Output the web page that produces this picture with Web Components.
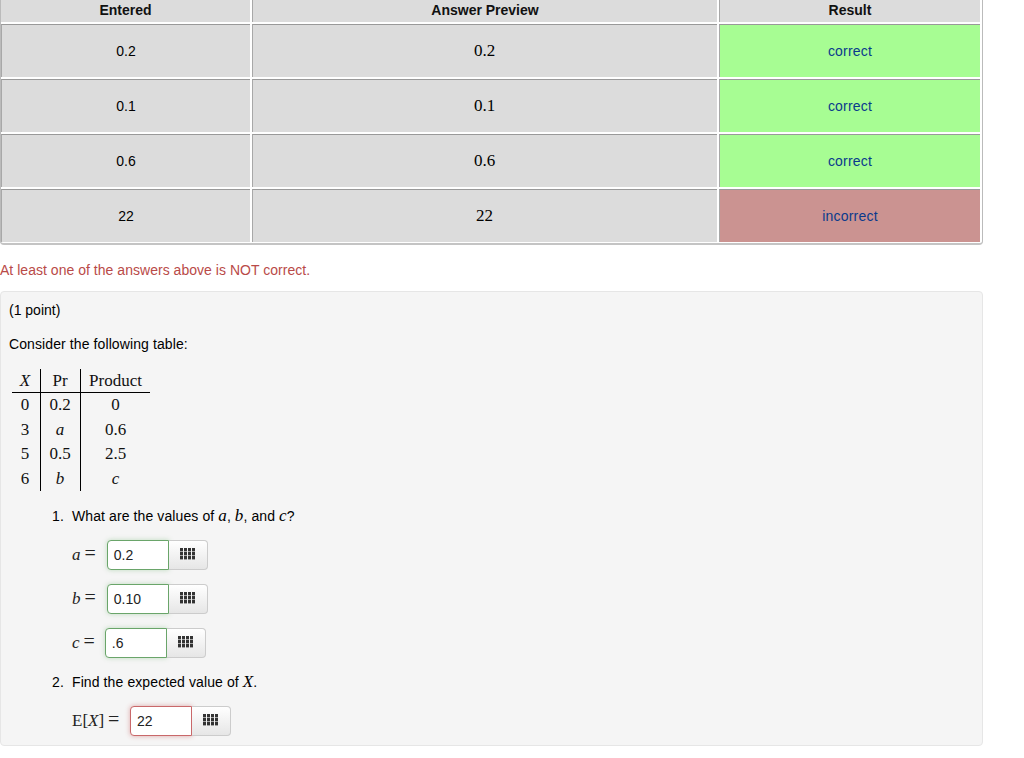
<!DOCTYPE html>
<html>
<head>
<meta charset="utf-8">
<title>Problem</title>
<style>
    html, body { margin: 0; background: #fff; overflow: hidden; }
    body { font: 14px/20px "Liberation Sans", Arial, sans-serif; color: #000; }
</style>
</head>
<body>

<results-table>
    <result-row entered="0.2" status="correct"></result-row>
    <result-row entered="0.1" status="correct"></result-row>
    <result-row entered="0.6" status="correct"></result-row>
    <result-row entered="22" status="incorrect"></result-row>
</results-table>

<attempt-message>At least one of the answers above is NOT correct.</attempt-message>

<problem-panel>
    <prob-text style="margin-bottom:14px;letter-spacing:0">(1 point)</prob-text>
    <prob-text>Consider the following table:</prob-text>
    <product-table></product-table>
    <prob-step num="1." style="margin-top:15px">
        <span slot="q">What are the values of <m-var>a</m-var>, <m-var>b</m-var>, and <m-var>c</m-var>?</span>
        <answer-field label="a" value="0.2" state="good"></answer-field>
        <answer-field label="b" value="0.10" state="good"></answer-field>
        <answer-field label="c" value=".6" state="good" style="--gap:10px"></answer-field>
    </prob-step>
    <prob-step num="2." style="margin-top:14px">
        <span slot="q">Find the expected value of <m-var>X</m-var>.</span>
        <answer-field label="E[X]" value="22" state="bad" style="--gap:10.5px"></answer-field>
    </prob-step>
</problem-panel>

<script>
//RESULTS TABLE
class ResultsTable extends HTMLElement {
    constructor(){
        super()
        this.attachShadow({mode: "open"})
        this.shadowRoot.innerHTML = `
        <style>
            :host {
                display: block;
                width: 983px;
                height: 245px;
                box-sizing: border-box;
                border-right: 1px solid #bbb;
                border-bottom: 2px solid #c4c4c4;
                border-left: 1px solid #bbb;
                border-bottom-right-radius: 4px;
                border-bottom-left-radius: 4px;
                overflow: hidden;
            }
            .head {
                display: grid;
                grid-template-columns: 249px 465px 261px;
                column-gap: 2px;
                height: 22px;
            }
            .head div {
                background: #dcdcdc;
                border-left: 1px solid #a8a8a8;
                font-weight: bold;
                text-align: center;
                line-height: 20px;
                color: #111;
            }
            .head div:first-child { border-left: 0; }
        </style>
        <div class="head"><div>Entered</div><div>Answer Preview</div><div>Result</div></div>
        <slot></slot>
        `
    }
}
customElements.define("results-table", ResultsTable)

class ResultRow extends HTMLElement {
    constructor(){
        super()
        this.attachShadow({mode: "open"})
        const val = this.getAttribute("entered")
        const status = this.getAttribute("status")
        this.shadowRoot.innerHTML = `
        <style>
            :host {
                display: grid;
                grid-template-columns: 249px 465px 261px;
                column-gap: 2px;
                height: 55px;
                padding-top: 2px;
                box-sizing: border-box;
            }
            div {
                display: flex;
                align-items: center;
                justify-content: center;
                background: #dcdcdc;
                border-top: 1px solid #999;
                border-left: 1px solid #a8a8a8;
                box-sizing: border-box;
                padding-bottom: 1px;
            }
            div:first-child { border-left: 0; }
            .prev { font: 17px "Liberation Serif", serif; padding-right: 1px; }
            .st { color: #0a3a8c; letter-spacing: 0.2px; }
            .correct { background: #a7fd93; }
            .incorrect { background: #cb9391; }
        </style>
        <div>${val}</div>
        <div class="prev">${val}</div>
        <div class="st ${status}">${status}</div>
        `
    }
}
customElements.define("result-row", ResultRow)

//MESSAGE UNDER THE TABLE
class AttemptMessage extends HTMLElement {
    constructor(){
        super()
        this.attachShadow({mode: "open"})
        this.shadowRoot.innerHTML = `
        <style>
            :host {
                display: block;
                color: #b94a48;
                margin-top: 15px;
                height: 31px;
                letter-spacing: 0.03px;
            }
        </style>
        <slot></slot>
        `
    }
}
customElements.define("attempt-message", AttemptMessage)

//PROBLEM WELL
class ProblemPanel extends HTMLElement {
    constructor(){
        super()
        this.attachShadow({mode: "open"})
        this.shadowRoot.innerHTML = `
        <style>
            :host {
                display: block;
                width: 983px;
                height: 455px;
                box-sizing: border-box;
                padding: 8px 8px;
                background: #f5f5f5;
                border: 1px solid #e6e6e6;
                border-radius: 4px;
            }
        </style>
        <slot></slot>
        `
    }
}
customElements.define("problem-panel", ProblemPanel)

class ProbText extends HTMLElement {
    constructor(){
        super()
        this.attachShadow({mode: "open"})
        this.shadowRoot.innerHTML = `
        <style>
            :host { display: block; letter-spacing: 0.1px; }
        </style>
        <slot></slot>
        `
    }
}
customElements.define("prob-text", ProbText)

class MVar extends HTMLElement {
    constructor(){
        super()
        this.attachShadow({mode: "open"})
        this.shadowRoot.innerHTML = `<style>
            :host {
                display: inline;
                font: italic 17px "Liberation Serif", serif;
            }
        </style><slot></slot>`
    }
}
customElements.define("m-var", MVar)

//THE X / Pr / Product TABLE
class ProductTable extends HTMLElement {
    constructor(){
        super()
        this.attachShadow({mode: "open"})
        const rows = [
            ["0", "0.2", "0"],
            ["3", "<i>a</i>", "0.6"],
            ["5", "0.5", "2.5"],
            ["6", "<i>b</i>", "<i>c</i>"]
        ]
        let cells = `<div class="c a h"><i>X</i></div><div class="c b h">Pr</div><div class="c p h">Product</div>`
        rows.forEach(r => {
            cells += `<div class="c a">${r[0]}</div><div class="c b">${r[1]}</div><div class="c p">${r[2]}</div>`
        })
        this.shadowRoot.innerHTML = `
        <style>
            :host {
                display: block;
                margin: 15px 0 0 3px;
                width: 138px;
            }
            .grid {
                display: grid;
                grid-template-columns: 28px 41px 69px;
                grid-template-rows: 24px repeat(4, 24.5px);
                font: 17px/24px "Liberation Serif", serif;
                color: #111;
            }
            .c { text-align: center; }
            .a { padding-right: 2px; }
            .h { border-bottom: 1px solid #000; }
            .b { border-left: 1px solid #000; border-right: 1px solid #000; padding-right: 1px; }
        </style>
        <div class="grid">${cells}</div>
        `
    }
}
customElements.define("product-table", ProductTable)

//NUMBERED QUESTION
class ProbStep extends HTMLElement {
    constructor(){
        super()
        this.attachShadow({mode: "open"})
        this.shadowRoot.innerHTML = `
        <style>
            :host {
                display: grid;
                grid-template-columns: 20px 1fr;
                margin-left: 43px;
                letter-spacing: 0.1px;
            }
            .fields {
                grid-column: 2;
                display: flex;
                flex-direction: column;
                align-items: flex-start;
                gap: 14px;
                margin-top: 14px;
            }
        </style>
        <div>${this.getAttribute("num")}</div>
        <div><slot name="q"></slot></div>
        <div class="fields"><slot></slot></div>
        `
    }
}
customElements.define("prob-step", ProbStep)

//ANSWER BOX + PALETTE BUTTON
class AnswerField extends HTMLElement {
    constructor(){
        super()
        this.attachShadow({mode: "open"})
        const label = this.getAttribute("label")
        const value = this.getAttribute("value")
        const state = this.getAttribute("state")
        const labelHtml = label == "E[X]" ? `E[<i>X</i>]` : `<i>${label}</i>`
        let dots = ""
        for (let row = 0; row < 3; row++) {
            for (let col = 0; col < 4; col++) {
                dots += `<rect x="${col * 4}" y="${row * 4}" width="3" height="3.4"/>`
            }
        }
        this.shadowRoot.innerHTML = `
        <style>
            :host {
                display: inline-flex;
                align-items: center;
                height: 30px;
            }
            .lbl {
                font: 17px/30px "Liberation Serif", serif;
                color: #222;
                margin-right: var(--gap, 11px);
                white-space: nowrap;
                letter-spacing: 0;
            }
            .eq { margin-left: 4px; font-size: 20px; line-height: 20px; }
            .box {
                box-sizing: border-box;
                width: 62px;
                height: 30px;
                padding: 0 6px;
                background: #fff;
                border-radius: 4px 0 0 4px;
                line-height: 28px;
                color: #222;
                letter-spacing: 0;
            }
            .good { border: 1px solid #6aa56a; box-shadow: 0 0 5px rgba(90,170,90,.35); }
            .bad { border: 1px solid #c9686a; box-shadow: 0 0 5px rgba(190,70,70,.45); }
            .btn {
                box-sizing: border-box;
                width: 39px;
                height: 30px;
                padding: 0 1px 2px 0;
                display: flex;
                align-items: center;
                justify-content: center;
                border: 1px solid #ccc;
                border-left: 0;
                border-radius: 0 4px 4px 0;
                background: linear-gradient(#fff, #e6e6e6);
            }
            svg { display: block; fill: #333; }
        </style>
        <span class="lbl">${labelHtml}<span class="eq">=</span></span>
        <div class="box ${state}">${value}</div>
        <div class="btn"><svg width="15" height="12" viewBox="0 0 15 12">${dots}</svg></div>
        `
    }
}
customElements.define("answer-field", AnswerField)
</script>
</body>
</html>
